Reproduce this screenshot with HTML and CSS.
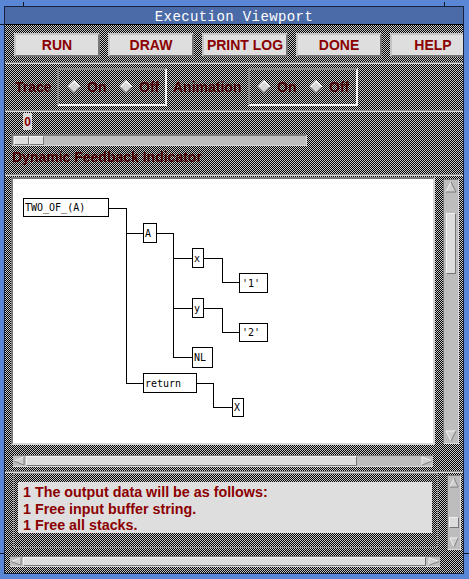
FILE: index.html
```html
<!DOCTYPE html>
<html>
<head>
<meta charset="utf-8">
<title>Execution Viewport</title>
<link rel="stylesheet" href="styles.css">
</head>
<body>
<div class="win">
  <span class="tick tick-tl-v"></span>
  <span class="tick tick-tl-h"></span>
  <span class="tick tick-tr-v"></span>
  <span class="tick tick-bl-h"></span>
  <span class="tick tick-br-h"></span>
  <div class="inner">
    <div class="title">Execution Viewport</div>
    <div class="client">
      <div class="btnrow">
        <div class="btn">RUN</div>
        <div class="btn">DRAW</div>
        <div class="btn">PRINT LOG</div>
        <div class="btn">DONE</div>
        <div class="btn">HELP</div>
      </div>
      <div class="sep sep1"></div>
      <div class="radiorow">
        <div class="stip lbl lbl-trace">Trace</div>
        <div class="rframe rframe1">
          <div class="radio"><svg class="dia" width="14" height="14" viewBox="0 0 14 14"><polygon points="7,1 13,7 7,13 1,7" fill="#d6d6d6"/><polyline points="1,7 7,1 13,7" fill="none" stroke="#ffffff" stroke-width="1.3"/><polyline points="1,7 7,13 13,7" fill="none" stroke="#7a7a7a" stroke-width="1.3"/></svg><div class="stip rtxt">On</div></div>
          <div class="radio"><svg class="dia" width="14" height="14" viewBox="0 0 14 14"><polygon points="7,1 13,7 7,13 1,7" fill="#d6d6d6"/><polyline points="1,7 7,1 13,7" fill="none" stroke="#ffffff" stroke-width="1.3"/><polyline points="1,7 7,13 13,7" fill="none" stroke="#7a7a7a" stroke-width="1.3"/></svg><div class="stip rtxt">Off</div></div>
        </div>
        <div class="stip lbl lbl-anim">Animation</div>
        <div class="rframe rframe2">
          <div class="radio"><svg class="dia" width="14" height="14" viewBox="0 0 14 14"><polygon points="7,1 13,7 7,13 1,7" fill="#d6d6d6"/><polyline points="1,7 7,1 13,7" fill="none" stroke="#ffffff" stroke-width="1.3"/><polyline points="1,7 7,13 13,7" fill="none" stroke="#7a7a7a" stroke-width="1.3"/></svg><div class="stip rtxt">On</div></div>
          <div class="radio"><svg class="dia" width="14" height="14" viewBox="0 0 14 14"><polygon points="7,1 13,7 7,13 1,7" fill="#d6d6d6"/><polyline points="1,7 7,1 13,7" fill="none" stroke="#ffffff" stroke-width="1.3"/><polyline points="1,7 7,13 13,7" fill="none" stroke="#7a7a7a" stroke-width="1.3"/></svg><div class="stip rtxt">Off</div></div>
        </div>
      </div>
      <div class="sep sep2"></div>
      <div class="val">0</div>
      <div class="trough"><div class="sthumb"><span></span><span></span></div></div>
      <div class="stip dfi">Dynamic Feedback Indicator</div>
      <div class="sep sep3"></div>
      <div class="drawrow">
        <div class="canvasframe">
          <svg class="tree" width="420" height="264" viewBox="0 0 420 264">
            <g fill="none" stroke="#000" stroke-width="1" shape-rendering="crispEdges">
              <rect x="10.5" y="19.5" width="85" height="18"/>
              <rect x="130.5" y="44.5" width="13" height="19"/>
              <rect x="179.5" y="69.5" width="11" height="19"/>
              <rect x="226.5" y="94.5" width="28" height="19"/>
              <rect x="179.5" y="119.5" width="11" height="19"/>
              <rect x="226.5" y="144.5" width="28" height="18"/>
              <rect x="179.5" y="168.5" width="20" height="20"/>
              <rect x="130.5" y="194.5" width="53" height="19"/>
              <rect x="219.5" y="219.5" width="11" height="18"/>
              <path d="M96 29.5H113.5V204.5 M113 54.5H130 M144 54.5H160.5V178.5 M160 79.5H179 M160 129.5H179 M160 178.5H179 M191 79.5H209.5V103.5H226 M191 129.5H209.5V153.5H226 M113 204.5H130 M184 204.5H200.5V228.5H219"/>
            </g>
            <g class="ttext" fill="#000">
              <text x="12" y="32">TWO_OF_(A)</text>
              <text x="132" y="58">A</text>
              <text x="181" y="83">x</text>
              <text x="229" y="108">'1'</text>
              <text x="181" y="133">y</text>
              <text x="229" y="157">'2'</text>
              <text x="181" y="182">NL</text>
              <text x="132" y="208">return</text>
              <text x="221" y="232">X</text>
            </g>
          </svg>
        </div>
        <div class="vsb vsb1">
          <svg class="arrow" viewBox="0 0 12 12" preserveAspectRatio="none"><polygon points="6,1 11,11 1,11" fill="#cfcfcf"/><polyline points="1,11 6,1" fill="none" stroke="#f2f2f2"/><polyline points="6,1 11,11 1,11" fill="none" stroke="#7a7a7a"/></svg>
          <div class="vthumb"></div>
          <div class="spacer"></div>
          <svg class="arrow" viewBox="0 0 12 12" preserveAspectRatio="none"><polygon points="1,1 11,1 6,11" fill="#cfcfcf"/><polyline points="6,11 1,1 11,1" fill="none" stroke="#f2f2f2"/><polyline points="11,1 6,11" fill="none" stroke="#7a7a7a"/></svg>
        </div>
      </div>
      <div class="hsb hsb1">
        <svg class="harrow" viewBox="0 0 12 12" preserveAspectRatio="none"><polygon points="1,6 11,1 11,11" fill="#cfcfcf"/><polyline points="1,6 11,1" fill="none" stroke="#f2f2f2"/><polyline points="11,1 11,11 1,6" fill="none" stroke="#7a7a7a"/></svg>
        <div class="hthumb"></div>
        <div class="spacer"></div>
        <svg class="harrow" viewBox="0 0 12 12" preserveAspectRatio="none"><polygon points="1,1 11,6 1,11" fill="#cfcfcf"/><polyline points="1,11 1,1 11,6" fill="none" stroke="#f2f2f2"/><polyline points="11,6 1,11" fill="none" stroke="#7a7a7a"/></svg>
      </div>
      <div class="sep sep4"></div>
      <div class="textrow">
        <div class="tframe">
          <div class="tarea">
            <div>1 The output data will be as follows:</div>
            <div>1 Free input buffer string.</div>
            <div>1 Free all stacks.</div>
          </div>
        </div>
        <div class="vsb vsb2">
          <svg class="arrow" viewBox="0 0 12 12" preserveAspectRatio="none"><polygon points="6,1 11,11 1,11" fill="#cfcfcf"/><polyline points="1,11 6,1" fill="none" stroke="#f2f2f2"/><polyline points="6,1 11,11 1,11" fill="none" stroke="#7a7a7a"/></svg>
          <div class="vthumb"></div>
          <div class="spacer"></div>
          <svg class="arrow" viewBox="0 0 12 12" preserveAspectRatio="none"><polygon points="1,1 11,1 6,11" fill="#cfcfcf"/><polyline points="6,11 1,1 11,1" fill="none" stroke="#f2f2f2"/><polyline points="11,1 6,11" fill="none" stroke="#7a7a7a"/></svg>
        </div>
      </div>
      <div class="hsb hsb2">
        <svg class="harrow" viewBox="0 0 12 12" preserveAspectRatio="none"><polygon points="1,6 11,1 11,11" fill="#cfcfcf"/><polyline points="1,6 11,1" fill="none" stroke="#f2f2f2"/><polyline points="11,1 11,11 1,6" fill="none" stroke="#7a7a7a"/></svg>
        <div class="hthumb"></div>
        <div class="spacer"></div>
        <svg class="harrow" viewBox="0 0 12 12" preserveAspectRatio="none"><polygon points="1,1 11,6 1,11" fill="#cfcfcf"/><polyline points="1,11 1,1 11,6" fill="none" stroke="#f2f2f2"/><polyline points="11,6 1,11" fill="none" stroke="#7a7a7a"/></svg>
      </div>
    </div>
  </div>
</div>
</body>
</html>
```

FILE: styles.css
```css
html, body {
  margin: 0;
  padding: 0;
  background: #5a86d6;
}

.win {
  position: relative;
  width: 469px;
  height: 579px;
  box-sizing: border-box;
  padding: 6px 5px 5px 4px;
  background: #5a86d6;
  overflow: hidden;
}

.tick {
  position: absolute;
  background: #10182c;
}
.tick-tl-v { left: 23px; top: 2px; width: 1px; height: 5px; }
.tick-tl-h { left: 0; top: 24px; width: 4px; height: 1px; }
.tick-tr-v { left: 444px; top: 2px; width: 1px; height: 5px; }
.tick-bl-h { left: 0; top: 553px; width: 4px; height: 1px; }
.tick-br-h { left: 464px; top: 553px; width: 5px; height: 1px; }

.inner {
  height: 100%;
  box-sizing: border-box;
  border: 1px solid #18223a;
  display: flex;
  flex-direction: column;
}

.title {
  height: 17px;
  flex: none;
  background: #4b6ba8;
  border-bottom: 1px solid #000;
  color: #ffffff;
  font-family: "Liberation Mono", "DejaVu Sans Mono", monospace;
  font-size: 14px;
  letter-spacing: 0.4px;
  line-height: 20px;
  text-align: center;
  overflow: hidden;
}

.client {
  flex: 1;
  display: flex;
  flex-direction: column;
  background-color: #c8c8c8;
  background-image: conic-gradient(#000 0 25%, transparent 0 50%, #000 0 75%, transparent 0);
  background-size: 2px 2px;
  overflow: hidden;
  font-family: "Liberation Sans", Arial, sans-serif;
  font-weight: bold;
  font-size: 14px;
}

/* buttons */
.btnrow {
  display: flex;
  gap: 8px;
  margin-top: 8px;
  padding-left: 9px;
  height: 24px;
  flex: none;
}
.btn {
  flex: none;
  width: 86px;
  height: 24px;
  box-sizing: border-box;
  background: #dedede;
  border: 2px solid;
  border-color: #c4c4c4 #767676 #767676 #c4c4c4;
  color: #8b0000;
  text-align: center;
  line-height: 20px;
}

.sep {
  flex: none;
  height: 2px;
  box-sizing: border-box;
  border-top: 1px solid #8a8a8a;
  border-bottom: 1px solid #d8d8d8;
}
.sep1 { margin-top: 5px; }
.sep2 { margin-top: 4px; }
.sep3 { margin-top: 8px; }
.sep4 { margin-top: 4px; }

/* stippled (insensitive) text */
.stip {
  color: #8b0000;
  -webkit-mask-image: conic-gradient(#000 0 25%, transparent 0 50%, #000 0 75%, transparent 0);
  -webkit-mask-size: 2px 2px;
  mask-image: conic-gradient(#000 0 25%, transparent 0 50%, #000 0 75%, transparent 0);
  mask-size: 2px 2px;
}

.radiorow {
  flex: none;
  display: flex;
  align-items: center;
  height: 38px;
  margin-top: 4px;
  padding-left: 10px;
}
.lbl {
  flex: none;
  height: 18px;
  line-height: 18px;
}
.lbl-trace { width: 42px; }
.lbl-anim { width: 75px; margin-left: 6px; }

.rframe {
  flex: none;
  width: 110px;
  height: 38px;
  box-sizing: border-box;
  border: 2px solid;
  border-color: #8a8a8a #f2f2f2 #f2f2f2 #8a8a8a;
  display: flex;
  align-items: center;
}
.rframe1 { padding-left: 8px; }
.rframe2 { padding-left: 7px; }

.radio {
  display: flex;
  align-items: center;
  gap: 6px;
  width: 52px;
  height: 18px;
  flex: none;
}
.rtxt {
  height: 18px;
  line-height: 18px;
}
.dia { flex: none; display: block; }

/* value + slider */
.val {
  flex: none;
  margin-top: 1px;
  margin-left: 18px;
  width: 9px;
  height: 17px;
  background: #d9d9d9;
  color: #8b0000;
  font-size: 12px;
  line-height: 18px;
  text-align: center;
}

.trough {
  flex: none;
  margin-top: 4px;
  margin-left: 6px;
  width: 296px;
  height: 12px;
  box-sizing: border-box;
  background: #bdbdbd;
  border-style: solid;
  border-width: 2px 1px 1px 2px;
  border-color: #7a7a7a #d6d6d6 #d6d6d6 #7a7a7a;
}
.sthumb {
  display: flex;
  margin: 0 0 0 1px;
  height: 9px;
}
.sthumb span {
  width: 15px;
  height: 9px;
  box-sizing: border-box;
  background: #dcdcdc;
  border-style: solid;
  border-width: 1px;
  border-color: #efefef #7a7a7a #7a7a7a #efefef;
}

.dfi {
  flex: none;
  margin-top: 3px;
  margin-left: 7px;
  height: 17px;
  line-height: 17px;
  align-self: flex-start;
}

/* drawing area */
.drawrow {
  flex: none;
  display: flex;
  margin-top: 1px;
  height: 268px;
}
.canvasframe {
  flex: none;
  margin-left: 6px;
  width: 424px;
  height: 268px;
  box-sizing: border-box;
  border: 2px solid;
  border-color: #7a7a7a #d6d6d6 #d6d6d6 #7a7a7a;
  background: #ffffff;
  overflow: hidden;
}
.tree { display: block; }
.ttext {
  font-family: "DejaVu Sans Mono", "Liberation Mono", monospace;
  font-size: 10px;
  font-weight: normal;
}

/* scrollbars */
.vsb {
  flex: none;
  display: flex;
  flex-direction: column;
  box-sizing: border-box;
  background: #bdbdbd;
  border: 1px solid;
  border-color: #7a7a7a #dcdcdc #dcdcdc #7a7a7a;
  padding: 1px;
}
.vsb1 {
  margin-left: 8px;
  margin-top: 2px;
  width: 16px;
  height: 265px;
}
.vsb2 {
  margin-left: 9px;
  margin-top: 2px;
  width: 14px;
  height: 75px;
}
.arrow {
  display: block;
  flex: none;
  width: 100%;
  height: 12px;
}
.vsb2 .arrow { height: 11px; }
.spacer { flex: 1; }
.vthumb {
  flex: none;
  align-self: center;
  box-sizing: border-box;
  background: #dcdcdc;
  border: 1px solid;
  border-color: #efefef #767676 #767676 #efefef;
}
.vsb1 .vthumb { width: 10px; margin-top: 20px; height: 61px; }
.vsb2 .vthumb { width: 10px; margin-top: 29px; height: 11px; }

.hsb {
  flex: none;
  display: flex;
  box-sizing: border-box;
  background: #bdbdbd;
  border-top: 1px solid #7a7a7a;
  border-bottom: 1px solid #dcdcdc;
}
.hsb1 {
  margin-top: 10px;
  margin-left: 8px;
  width: 420px;
  height: 12px;
}
.hsb2 {
  margin-top: 6px;
  margin-left: 5px;
  width: 430px;
  height: 11px;
}
.harrow {
  display: block;
  flex: none;
  width: 12px;
  height: 100%;
}
.hthumb {
  flex: none;
  box-sizing: border-box;
  background: #dcdcdc;
  border: 1px solid;
  border-color: #efefef #767676 #767676 #efefef;
  margin-left: 1px;
}
.hsb1 .hthumb { width: 331px; }
.hsb2 .hthumb { width: 403px; }

/* text output */
.textrow {
  flex: none;
  display: flex;
  height: 77px;
}
.tframe {
  flex: none;
  margin-left: 8px;
  width: 425px;
  height: 75px;
  box-sizing: border-box;
  border: 1px solid #8c8c8c;
  padding: 8px 5px 0 4px;
}
.tarea {
  height: 51px;
  box-sizing: border-box;
  background: #dedede;
  color: #8b0000;
  font-size: 14.3px;
  padding: 2px 0 0 5px;
  line-height: 16.5px;
  white-space: nowrap;
  overflow: hidden;
}
```
